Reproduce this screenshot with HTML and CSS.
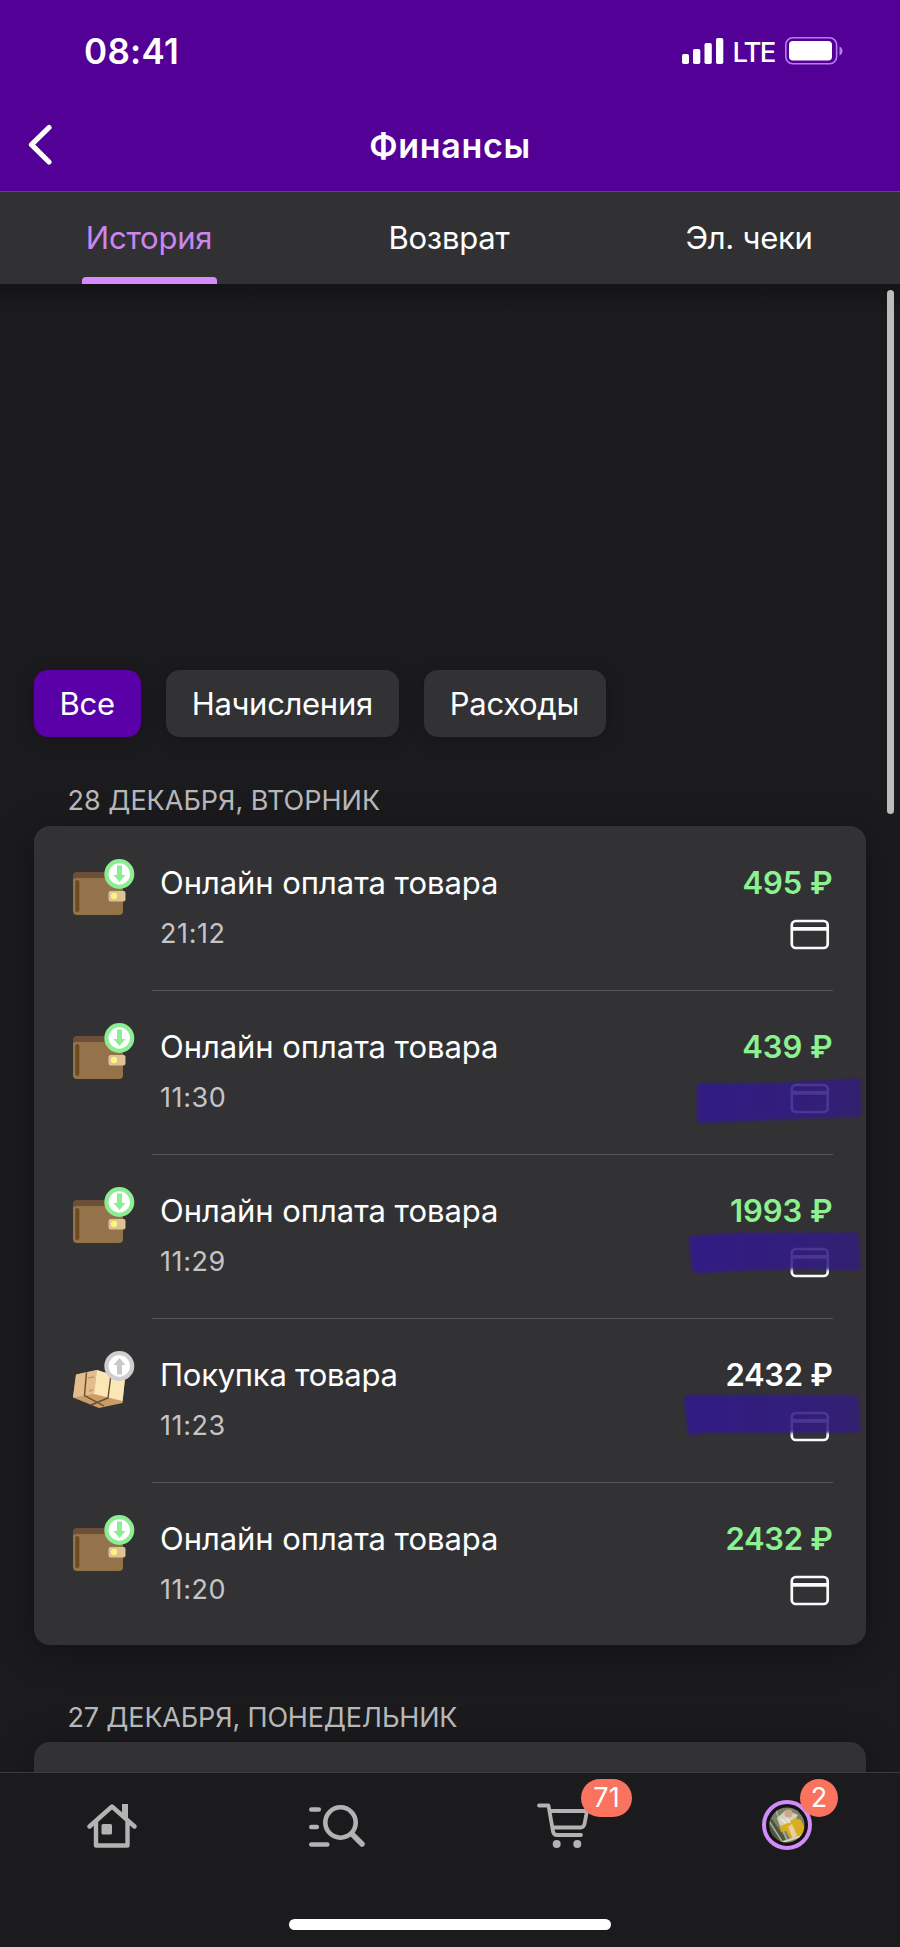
FILE: index.html
```html
<!DOCTYPE html>
<html lang="ru">
<head>
<meta charset="utf-8">
<title>Финансы</title>
<link rel="stylesheet" href="styles.css">
</head>
<body>
<svg class="defs" width="0" height="0">
  <defs>
    <linearGradient id="ink"><stop offset="0" stop-color="#311990"/><stop offset=".85" stop-color="#321d80"/><stop offset="1" stop-color="#321e76"/></linearGradient>
    <symbol id="wallet" viewBox="0 0 64 56">
      <path d="M1 18q0-4 4-4h43l3 8v30q0 4-4 4H5q-4 0-4-4z" fill="#94734b"/>
      <path d="M1 20v-3q0-4 4-4h34v6H5q-3 0-4 1z" fill="#6b4f3a"/>
      <rect x="3.300" y="21" width="4" height="32" rx="2" fill="#6d4b20"/>
      <rect x="36.500" y="32" width="17" height="10.500" rx="2" fill="#dcc295"/>
      <circle cx="42" cy="37" r="3.200" fill="#fff380"/>
      <circle cx="47.300" cy="15" r="15" fill="#8cee92"/>
      <circle cx="47.300" cy="15" r="10.700" fill="#fff"/>
      <path d="M45 6.500h5v9.500h3.500l-6 7-6-7H45z" fill="#8cee92"/>
    </symbol>
    <symbol id="parcel" viewBox="0 0 64 58">
      <path d="M4 23.500l21-4.500 28 9-2.500 24L27 57 1 46.500z" fill="#c99d68"/>
      <path d="M4 23.500l21-4.500-3 24L1 46.500z" fill="#e3bd8c"/>
      <path d="M25 19l28 9-2.500 22L22 43z" fill="#fbe6b6"/>
      <path d="M14.500 21.500l-2 23L32 55M39 23.500L36 47 19 54" fill="none" stroke="#6b4a33" stroke-width="1.400"/>
      <path d="M16 27l6-1M17 40l4-1" stroke="#c2966b" stroke-width="1.500"/>
      <circle cx="47.300" cy="15" r="15" fill="#cfcfd0"/>
      <circle cx="47.300" cy="15" r="10.700" fill="#fff"/>
      <path d="M45 23.500h5V14h3.500l-6-7-6 7H45z" fill="#c8c8ca"/>
    </symbol>
    <symbol id="card" viewBox="0 0 40 32">
      <rect x="1.800" y="2" width="35.900" height="27" rx="4" fill="none" stroke="currentColor" stroke-width="2.700"/>
      <path d="M2 9.800h36" stroke="currentColor" stroke-width="3.800"/>
    </symbol>
  </defs>
</svg>
<div class="screen">
  <header class="header">
    <div class="status">
      <span class="clock">08:41</span>
      <div class="signal">
        <svg width="42" height="28" viewBox="0 0 42 28" fill="#fff"><rect x="0" y="17" width="7" height="10" rx="1.800"/><rect x="11" y="12" width="7.300" height="15" rx="1.800"/><rect x="22.500" y="6" width="7.300" height="21" rx="1.800"/><rect x="34" y="1" width="7.300" height="26" rx="1.800"/></svg>
        <span class="lte">LTE</span>
        <svg width="58" height="28" viewBox="0 0 58 28"><rect x=".8" y=".8" width="50.800" height="26" rx="7" fill="none" stroke="#b67fee" stroke-width="1.600"/><rect x="4" y="4" width="43" height="19.500" rx="4" fill="#fff"/><path d="M54.500 9.500q3 1.500 3 4.500t-3 4.500z" fill="#b67fee"/></svg>
      </div>
    </div>
    <div class="titlebar">
      <svg class="back" width="24" height="42" viewBox="0 0 24 42"><path d="M21 3.500L3.500 20.700 21 38" fill="none" stroke="#fff" stroke-width="5.200" stroke-linecap="round" stroke-linejoin="round"/></svg>
      <h1 class="title">Финансы</h1>
    </div>
  </header>
  <nav class="tabs">
    <a class="tab tab-active"><span>История</span></a>
    <a class="tab"><span>Возврат</span></a>
    <a class="tab"><span>Эл. чеки</span></a>
  </nav>
  <main class="content">
    <div class="scrollbar"></div>
    <div class="chips">
      <span class="chip chip-active">Все</span>
      <span class="chip">Начисления</span>
      <span class="chip">Расходы</span>
    </div>
    <h2 class="date">28 ДЕКАБРЯ, ВТОРНИК</h2>
    <section class="panel">
      <article class="row">
        <svg class="kind" width="64" height="56"><use href="#wallet"/></svg>
        <div class="body"><div class="info"><span class="name">Онлайн оплата товара</span><span class="time">21:12</span></div>
        <div class="sum"><span class="amount plus">495 ₽</span><svg class="pay" width="40" height="32"><use href="#card"/></svg></div></div>
      </article>
      <article class="row">
        <svg class="kind" width="64" height="56"><use href="#wallet"/></svg>
        <div class="body"><div class="info"><span class="name">Онлайн оплата товара</span><span class="time">11:30</span></div>
        <div class="sum"><span class="amount plus">439 ₽</span><svg class="pay" width="40" height="32"><use href="#card"/></svg></div></div>
        <svg class="marker" width="220" height="164" viewBox="660 990 220 164"><path fill="url(#ink)" d="M697 1086q0-3 4-3 60 2 157-5q3 0 3 3v32q0 4-3 4-70 2-156 6q-5 0-5-4z"/></svg>
      </article>
      <article class="row">
        <svg class="kind" width="64" height="56"><use href="#wallet"/></svg>
        <div class="body"><div class="info"><span class="name">Онлайн оплата товара</span><span class="time">11:29</span></div>
        <div class="sum"><span class="amount plus">1993 ₽</span><svg class="pay" width="40" height="32"><use href="#card"/></svg></div></div>
        <svg class="marker" width="220" height="164" viewBox="660 1154 220 164"><path fill="url(#ink)" d="M689 1239q0-3 4-3 30-3 60-3.500h101q5 0 5 4l2 29q0 5-4 5-60-2-110 0l-50 3q-4 0-5-4z"/></svg>
      </article>
      <article class="row">
        <svg class="kind" width="64" height="58"><use href="#parcel"/></svg>
        <div class="body"><div class="info"><span class="name name-short">Покупка товара</span><span class="time">11:23</span></div>
        <div class="sum"><span class="amount amount-wide">2432 ₽</span><svg class="pay" width="40" height="32"><use href="#card"/></svg></div></div>
        <svg class="marker" width="220" height="164" viewBox="660 1318 220 164"><path fill="url(#ink)" d="M684 1399q1-4 5-4h166q4 0 4 4l2 30q0 4-4 4H704q-6 0-10 2-4 2-6-3z"/></svg>
      </article>
      <article class="row">
        <svg class="kind" width="64" height="56"><use href="#wallet"/></svg>
        <div class="body"><div class="info"><span class="name">Онлайн оплата товара</span><span class="time">11:20</span></div>
        <div class="sum"><span class="amount amount-wide plus">2432 ₽</span><svg class="pay" width="40" height="32"><use href="#card"/></svg></div></div>
      </article>
    </section>
    <h2 class="date date-next">27 ДЕКАБРЯ, ПОНЕДЕЛЬНИК</h2>
    <section class="panel panel-next"></section>
  </main>
  <footer class="dock">
    <a class="dock-item">
      <svg width="50" height="48" viewBox="87 1802 50 48" fill="none" stroke="#b3b3b3" stroke-width="4.400" stroke-linecap="round" stroke-linejoin="round"><path d="M89.500 1826.500L112 1806.500l22.500 20M96 1822v23.500h31.500V1822"/><path d="M122 1804h6v14h-6z" fill="#b3b3b3" stroke="none"/><rect x="101.500" y="1824" width="10.500" height="10.500" rx="1.500" fill="#b3b3b3" stroke="none"/></svg>
    </a>
    <a class="dock-item">
      <svg width="58" height="46" viewBox="309 1802 58 46" fill="none" stroke="#b3b3b3" stroke-width="4.600" stroke-linecap="round"><path d="M312.300 1808.500h7.500M312.300 1826h5.500M312.300 1843.500h16"/><circle cx="341.500" cy="1821.500" r="15.200"/><path d="M353 1833l10 10" stroke-width="5.500"/></svg>
    </a>
    <a class="dock-item">
      <svg width="54" height="48" viewBox="536 1802 54 48" fill="none" stroke="#b3b3b3" stroke-width="3.800" stroke-linecap="round" stroke-linejoin="round"><path d="M539 1805.500h9.500l4.500 26q.8 3.500 4 3.500h24"/><path d="M550 1811h37l-2.500 13q-.7 3.500-4 3.500H553"/><circle cx="556.700" cy="1844" r="4" fill="#b3b3b3" stroke="none"/><circle cx="577.300" cy="1844" r="4" fill="#b3b3b3" stroke="none"/></svg>
      <span class="badge badge-cart">71</span>
    </a>
    <a class="dock-item">
      <svg class="avatar" width="52" height="52" viewBox="0 0 52 52"><defs><clipPath id="face"><circle cx="26" cy="26" r="17.500"/></clipPath></defs><circle cx="26" cy="26" r="23" fill="#151117" stroke="#d08cf7" stroke-width="4"/>
      <g clip-path="url(#face)"><path d="M8 8h36v36H8z" fill="#7b8268"/><path d="M8 16l20 28H8z" fill="#4d5540"/><path d="M15 12l11 30M8 22l14 22" stroke="#a7ae94" stroke-width="1.500"/><path d="M16 19l9-8 12 5-8 12-9 2z" fill="#d7d0bd"/><path d="M19 27l8-3 7-5 6 2 5 11-7 7-8 2-5-9-5 1z" fill="#d9ad20"/><path d="M27 28l4-3 5 11-4 4z" fill="#e7cfa5"/><path d="M20 20l5 4M25 19l4 5" stroke="#f0e6d2" stroke-width="2"/><circle cx="27.500" cy="14.500" r="4" fill="#cba78c"/><path d="M22 43l22-7" stroke="#d3d5c0" stroke-width="2"/></g></svg>
      <span class="badge badge-me">2</span>
    </a>
    <div class="home-bar"></div>
  </footer>
</div>
</body>
</html>
```
FILE: styles.css
```css
* { box-sizing: border-box; }
body {
  margin: 0;
  background: #1b1b1d;
  color: #fff;
  font-family: Inter, "Liberation Sans", sans-serif;
  font-weight: 400;
}
h1, h2 { margin: 0; font-weight: inherit; }
svg { display: block; flex: none; }
.defs { position: absolute; }
.screen {
  width: 900px;
  height: 1947px;
  overflow: hidden;
  display: flex;
  flex-direction: column;
}
.header {
  height: 192px;
  flex: none;
  background: #520096;
  border-bottom: 1px solid #6b3a92;
}
.status {
  height: 102px;
  padding: 0 57px 0 84px;
  display: flex;
  align-items: center;
  justify-content: space-between;
}
.clock { font-size: 35px; font-weight: 600; line-height: 40px; letter-spacing: .3px; }
.signal { display: flex; align-items: center; }
.lte {
  margin: 2px 10.500px 0 8.500px;
  font-size: 27.500px;
  font-weight: 500;
  line-height: 30px;
  letter-spacing: -1.8px;
}
.titlebar {
  height: 86px;
  display: grid;
  grid-template-columns: 28px 24px 1fr 52px;
  align-items: center;
}
.back { grid-column: 2; }
.title {
  grid-column: 3;
  padding-top: 1px;
  text-align: center;
  font-size: 34px;
  font-weight: 600;
  line-height: 40px;
  letter-spacing: .7px;
}
.tabs {
  height: 92px;
  flex: none;
  display: grid;
  grid-template-columns: repeat(3, 1fr);
  background: #313133;
  font-size: 31px;
  letter-spacing: -.25px;
}
.tab {
  display: flex;
  flex-direction: column;
  align-items: center;
  padding: 27px 1px 0 0;
  line-height: 38px;
}
.tab span { margin-right: 1px; }
.tab-active { color: #cb86ee; }
.tab-active::after {
  content: "";
  width: 135px;
  height: 7px;
  margin-top: 20px;
  border-radius: 4px 4px 0 0;
  background: #d78bfa;
}
.content {
  height: 1488px;
  flex: none;
  position: relative;
  overflow: hidden;
  padding: 386px 34px 0;
  background: linear-gradient(#141416, #1b1b1d 30px);
}
.scrollbar {
  position: absolute;
  top: 6px;
  right: 6px;
  width: 7px;
  height: 524px;
  border-radius: 4px;
  background: #bdbdbd;
}
.chips { display: flex; gap: 25px; }
.chip {
  height: 67px;
  padding: 0 26.500px 0 25.500px;
  border-radius: 14px;
  background: #323234;
  font-size: 31px;
  line-height: 67px;
  letter-spacing: -.3px;
  box-shadow: 0 3px 18px rgba(0, 0, 0, .22);
}
.chip-active { background: #5a00a8; }
.date {
  margin: 46px 0 0 33.5px;
  height: 43px;
  font-size: 27px;
  line-height: 36px;
  color: #b7b7b9;
}
.panel {
  border-radius: 16px;
  background: #323234;
  box-shadow: 0 6px 36px rgba(0, 0, 0, .35);
}
.row {
  position: relative;
  height: 164px;
  display: flex;
  padding: 33px 33.5px 0 38px;
}
.row:last-child { height: 163px; }
.kind { margin-top: -.5px; }
.body {
  flex: 1;
  margin: -33px 0 -1px 15.500px;
  padding: 38px 0 0 8.500px;
  display: flex;
  justify-content: space-between;
  border-bottom: 1px solid #59595b;
}
.row:last-child .body { border-bottom: 0; }
.info, .sum { display: flex; flex-direction: column; }
.sum { align-items: flex-end; }
.name, .amount { font-size: 31px; line-height: 38px; letter-spacing: -.05px; }
.name-short { letter-spacing: -.25px; }
.amount { font-weight: 600; }
.amount-wide { letter-spacing: -.3px; }
.plus { color: #8cf291; }
.time {
  margin-top: 15px;
  font-size: 27px;
  line-height: 34px;
  letter-spacing: .6px;
  color: #c5c5c7;
}
.pay { margin: 16.500px 3px 0 0; color: #fafafa; }
.marker { position: absolute; right: -14px; top: 0; opacity: .88; filter: blur(1.5px); }
.date-next { margin-top: 54px; line-height: 37px; letter-spacing: -.16px; }
.panel-next { height: 60px; }
.dock {
  height: 175px;
  flex: none;
  position: relative;
  display: grid;
  grid-template-columns: 224px 226px 225px 225px;
  border-top: 1px solid #3c3c3e;
  background: #1b1b1d;
}
.dock-item {
  position: relative;
  height: 106px;
  display: flex;
  align-items: center;
  justify-content: center;
}
.avatar { margin: 0 1px 2px 0; }
.badge {
  position: absolute;
  top: 6px;
  height: 38px;
  border-radius: 19px;
  background: #fa735f;
  font-size: 27px;
  line-height: 38px;
  text-align: center;
}
.badge-cart { left: 131px; width: 51px; }
.badge-me { left: 125px; width: 38px; }
.home-bar {
  position: absolute;
  left: 289px;
  top: 146px;
  width: 322px;
  height: 11px;
  border-radius: 6px;
  background: #fff;
}
```
